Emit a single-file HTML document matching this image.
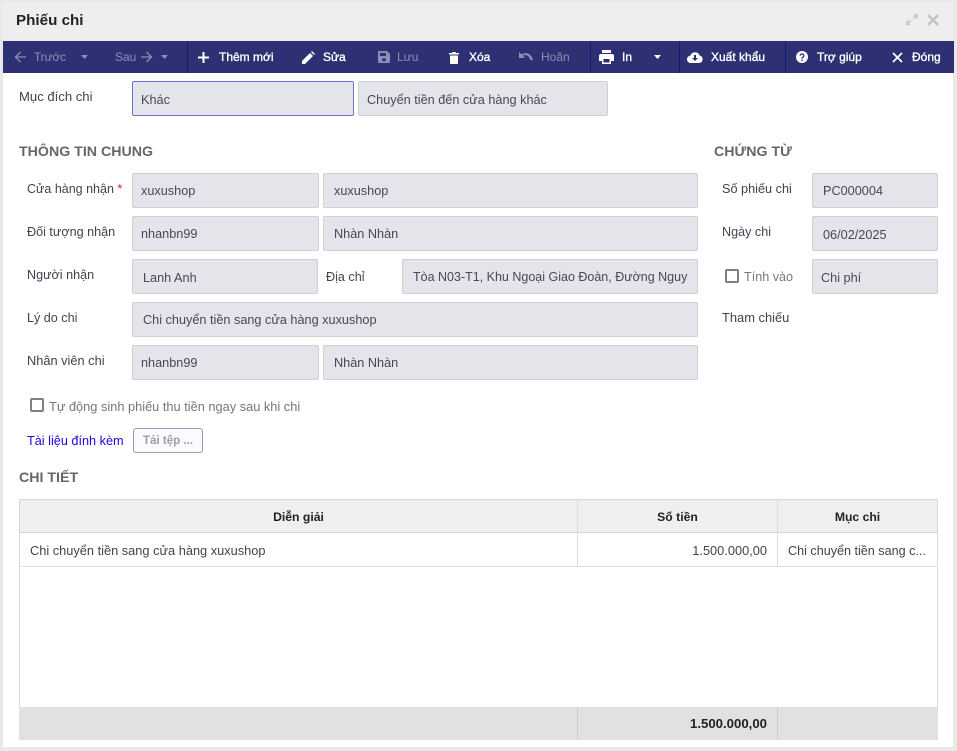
<!DOCTYPE html>
<html><head><meta charset="utf-8">
<style>
html,body{margin:0;padding:0;width:957px;height:751px;overflow:hidden;background:#e9e9e9;}
body{position:relative;font-family:"Liberation Sans",sans-serif;font-size:12.8px;color:#3c3c4a;}
.a{position:absolute;white-space:nowrap;}
.i{position:absolute;box-sizing:border-box;background:#e4e5ea;border:1px solid #cfd0d4;border-radius:2px;color:#4a4655;line-height:35px;white-space:nowrap;overflow:hidden;font-size:12.7px;}
.l{position:absolute;white-space:nowrap;color:#3f4450;font-size:12.6px;line-height:16px;}
.h{position:absolute;white-space:nowrap;color:#666;font-weight:bold;font-size:14.2px;line-height:18px;}
.t{position:absolute;white-space:nowrap;font-size:12px;line-height:16px;color:#fff;font-weight:normal;-webkit-text-stroke:.35px #fff;top:49px;}
.d{color:#8b8fb5;font-weight:normal;-webkit-text-stroke:0;}
.s{position:absolute;top:41px;width:1px;height:32px;background:#1c1478;}
svg{position:absolute;}
.cb{position:absolute;box-sizing:border-box;width:14px;height:14px;border:2px solid #808080;border-radius:2px;background:#fff;}
.c{position:absolute;background:#d4d4d4;}
.th{position:absolute;text-align:center;font-weight:bold;color:#222;font-size:12.2px;line-height:16px;white-space:nowrap;top:509px;}
</style></head><body>
<div class="a" style="left:3px;top:2px;width:950px;height:745px;background:#fff;"></div>
<div class="a" style="left:3px;top:2px;width:950px;height:39px;background:#eeeeee;"></div>
<div class="a" style="left:16px;top:11px;font-size:15.2px;line-height:20px;font-weight:bold;color:#222;">Phiếu chi</div>
<svg style="left:905px;top:13px" width="14" height="13" viewBox="0 0 14 13"><path d="M8 1h5v5l-1.800-1.800-2 2-1.400-1.400 2-2zM6 12H1V7l1.800 1.800 2-2 1.400 1.400-2 2z" fill="#c9c9c9"/></svg>
<svg style="left:927px;top:14px" width="12" height="12" viewBox="0 0 12 12"><path d="M1 1l10 10M11 1L1 11" stroke="#c4c4c4" stroke-width="2.600" fill="none"/></svg>

<div class="a" style="left:3px;top:41px;width:951px;height:32px;background:#2d3173;"></div>
<div class="s" style="left:187px"></div><div class="s" style="left:590px"></div><div class="s" style="left:679px"></div><div class="s" style="left:785px"></div>

<svg style="left:14px;top:51px" width="13" height="12" viewBox="0 0 13 12"><path d="M12 6H2M6.500 1L1.500 6l5 5" stroke="#8b8fb5" stroke-width="1.300" fill="none"/></svg>
<div class="t d" style="left:34px;letter-spacing:-.2px;">Trước</div>
<svg style="left:80px;top:55px" width="9" height="5" viewBox="0 0 9 5"><path d="M1 0h7L4.500 4z" fill="#8b8fb5"/></svg>
<div class="t d" style="left:115px;">Sau</div>
<svg style="left:140px;top:51px" width="13" height="12" viewBox="0 0 13 12"><path d="M1 6h10M6.500 1l5 5-5 5" stroke="#8b8fb5" stroke-width="1.300" fill="none"/></svg>
<svg style="left:160px;top:55px" width="9" height="5" viewBox="0 0 9 5"><path d="M1 0h7L4.500 4z" fill="#8b8fb5"/></svg>

<svg style="left:198px;top:52px" width="11" height="11" viewBox="0 0 11 11"><path d="M5.500 0v11M0 5.500h11" stroke="#fff" stroke-width="2" fill="none"/></svg>
<div class="t" style="left:219px;">Thêm mới</div>
<svg style="left:302px;top:51px" width="13" height="13" viewBox="0 0 13 13"><path d="M0 13V10L8 2l3 3-8 8zM9 1l1-1 3 3-1 1z" fill="#fff"/></svg>
<div class="t" style="left:323px;">Sửa</div>
<svg style="left:378px;top:51px" width="12" height="12" viewBox="0 0 12 12"><path fill-rule="evenodd" d="M1 0h8l3 3v8a1 1 0 0 1-1 1H1a1 1 0 0 1-1-1V1a1 1 0 0 1 1-1zM2 2v3h6V2zM6 7a1.800 1.800 0 1 0 .01 0z" fill="#8b8fb5"/></svg>
<div class="t d" style="left:397px;">Lưu</div>
<svg style="left:449px;top:52px" width="10" height="12" viewBox="0 0 10 12"><path d="M0 1h3l.5-1h3l.5 1h3v1.500H0zM1 3.500h8V11a1 1 0 0 1-1 1H2a1 1 0 0 1-1-1z" fill="#fff"/></svg>
<div class="t" style="left:469px;">Xóa</div>
<svg style="left:519px;top:52px" width="14" height="9" viewBox="0 0 14 9"><path d="M0 0v6h6L3.800 3.800C6.500 2 10 3 11.500 8.500L14 8C12.500 1.500 7 -.5 2.400 2.400z" fill="#8b8fb5"/></svg>
<div class="t d" style="left:541px;">Hoãn</div>

<svg style="left:599px;top:50px" width="15" height="14" viewBox="0 0 15 14"><path fill-rule="evenodd" d="M3 0h9v3H3zM2 4h11a2 2 0 0 1 2 2v5h-3v3H3v-3H0V6a2 2 0 0 1 2-2zM4.500 9v3.500h6V9z" fill="#fff"/></svg>
<div class="t" style="left:622px;">In</div>
<svg style="left:653px;top:55px" width="9" height="5" viewBox="0 0 9 5"><path d="M1 0h7L4.500 4z" fill="#fff"/></svg>
<svg style="left:687px;top:51px" width="16" height="12" viewBox="0 0 16 12"><path fill-rule="evenodd" d="M4 12a3.700 3.700 0 0 1-.6-7.400A5 5 0 0 1 12.800 4.600 3.800 3.800 0 0 1 12.500 12zM7 4v3H5l3 3 3-3H9V4z" fill="#fff"/></svg>
<div class="t" style="left:711px;">Xuất khẩu</div>
<svg style="left:796px;top:51px" width="12" height="12" viewBox="0 0 12 12"><circle cx="6" cy="6" r="6" fill="#fff"/><path d="M4.200 4.700a1.800 1.800 0 1 1 2.800 1.500C6.300 6.700 6 7 6 7.800" stroke="#2d3173" stroke-width="1.300" fill="none"/><rect x="5.300" y="8.600" width="1.400" height="1.400" fill="#2d3173"/></svg>
<div class="t" style="left:817px;">Trợ giúp</div>
<svg style="left:892px;top:52px" width="11" height="11" viewBox="0 0 11 11"><path d="M1 1l9 9M10 1l-9 9" stroke="#fff" stroke-width="1.800" fill="none"/></svg>
<div class="t" style="left:912px;">Đóng</div>

<div class="l" style="left:19px;top:89px;font-size:13.1px;">Mục đích chi</div>
<div class="i" style="left:132px;top:81px;width:222px;height:35px;padding-left:8px;border-color:#6a72cf;line-height:36px;">Khác</div>
<div class="i" style="left:358px;top:81px;width:250px;height:35px;padding-left:8px;line-height:36px;">Chuyển tiền đến cửa hàng khác</div>

<div class="h" style="left:19px;top:143px;">THÔNG TIN CHUNG</div>
<div class="h" style="left:714px;top:143px;">CHỨNG TỪ</div>

<div class="l" style="left:27px;top:181px;font-size:12.5px;">Cửa hàng nhận <span style="color:#e02020">*</span></div>
<div class="i" style="left:132px;top:173px;width:187px;height:35px;padding-left:8px;">xuxushop</div>
<div class="i" style="left:323px;top:173px;width:375px;height:35px;padding-left:10px;">xuxushop</div>

<div class="l" style="left:27px;top:224px;">Đối tượng nhận</div>
<div class="i" style="left:132px;top:216px;width:187px;height:35px;padding-left:8px;">nhanbn99</div>
<div class="i" style="left:323px;top:216px;width:375px;height:35px;padding-left:10px;">Nhàn Nhàn</div>

<div class="l" style="left:27px;top:267px;">Người nhận</div>
<div class="i" style="left:132px;top:259px;width:186px;height:35px;padding-left:10px;line-height:36px;">Lanh Anh</div>
<div class="l" style="left:326px;top:269px;">Địa chỉ</div>
<div class="i" style="left:402px;top:259px;width:296px;height:35px;padding:0 10px;font-size:12.5px;line-height:34px;">Tòa N03-T1, Khu Ngoại Giao Đoàn, Đường Nguy</div>

<div class="l" style="left:27px;top:310px;">Lý do chi</div>
<div class="i" style="left:132px;top:302px;width:566px;height:35px;padding-left:10px;">Chi chuyển tiền sang cửa hàng xuxushop</div>

<div class="l" style="left:27px;top:353px;font-size:12.8px;">Nhân viên chi</div>
<div class="i" style="left:132px;top:345px;width:187px;height:35px;padding-left:8px;">nhanbn99</div>
<div class="i" style="left:323px;top:345px;width:375px;height:35px;padding-left:10px;">Nhàn Nhàn</div>

<div class="l" style="left:722px;top:181px;font-size:12.7px;">Số phiếu chi</div>
<div class="i" style="left:812px;top:173px;width:126px;height:35px;padding-left:10px;">PC000004</div>
<div class="l" style="left:722px;top:224px;">Ngày chi</div>
<div class="i" style="left:812px;top:216px;width:126px;height:35px;padding-left:10px;line-height:36px;">06/02/2025</div>
<div class="cb" style="left:725px;top:269px;"></div>
<div class="l" style="left:744px;top:269px;color:#777;">Tính vào</div>
<div class="i" style="left:812px;top:259px;width:126px;height:35px;padding-left:8px;line-height:36px;">Chi phí</div>
<div class="l" style="left:722px;top:310px;font-size:12.9px;">Tham chiếu</div>

<div class="cb" style="left:30px;top:398px;"></div>
<div class="l" style="left:49px;top:399px;color:#777;font-size:12.8px;">Tự động sinh phiếu thu tiền ngay sau khi chi</div>
<div class="l" style="left:27px;top:433px;color:#2a00e0;font-size:12.7px;">Tài liệu đính kèm</div>
<div class="a" style="left:133px;top:428px;width:70px;height:25px;box-sizing:border-box;border:1px solid #9a96bd;border-radius:3px;background:#fbfbfd;color:#9e9aae;font-weight:bold;font-size:11.6px;line-height:23px;text-align:center;">Tải tệp ...</div>

<div class="h" style="left:19px;top:469px;">CHI TIẾT</div>

<div class="a" style="left:19px;top:499px;width:919px;height:241px;box-sizing:border-box;border:1px solid #d8d8d8;background:#fff;"></div>
<div class="a" style="left:20px;top:500px;width:917px;height:32px;background:#efefef;"></div>
<div class="c" style="left:20px;top:532px;width:917px;height:1px;"></div>
<div class="c" style="left:20px;top:566px;width:917px;height:1px;background:#e2e2e2;"></div>
<div class="c" style="left:577px;top:500px;width:1px;height:67px;background:#dcdcdc;"></div>
<div class="c" style="left:777px;top:500px;width:1px;height:67px;background:#dcdcdc;"></div>
<div class="th" style="left:20px;width:557px;">Diễn giải</div>
<div class="th" style="left:578px;width:199px;">Số tiền</div>
<div class="th" style="left:778px;width:159px;">Mục chi</div>
<div class="a" style="left:30px;top:543px;line-height:16px;color:#444;">Chi chuyển tiền sang cửa hàng xuxushop</div>
<div class="a" style="left:578px;top:543px;width:189px;text-align:right;line-height:16px;color:#444;">1.500.000,00</div>
<div class="a" style="left:788px;top:543px;line-height:16px;color:#444;font-size:12.6px;">Chi chuyển tiền sang c...</div>
<div class="a" style="left:19px;top:707px;width:919px;height:33px;background:#e1e1e1;"></div>
<div class="c" style="left:577px;top:707px;width:1px;height:33px;background:#cfcfcf;"></div>
<div class="c" style="left:777px;top:707px;width:1px;height:33px;background:#cfcfcf;"></div>
<div class="a" style="left:578px;top:716px;width:189px;text-align:right;font-weight:bold;font-size:13.2px;line-height:16px;color:#222;">1.500.000,00</div>
</body></html>
